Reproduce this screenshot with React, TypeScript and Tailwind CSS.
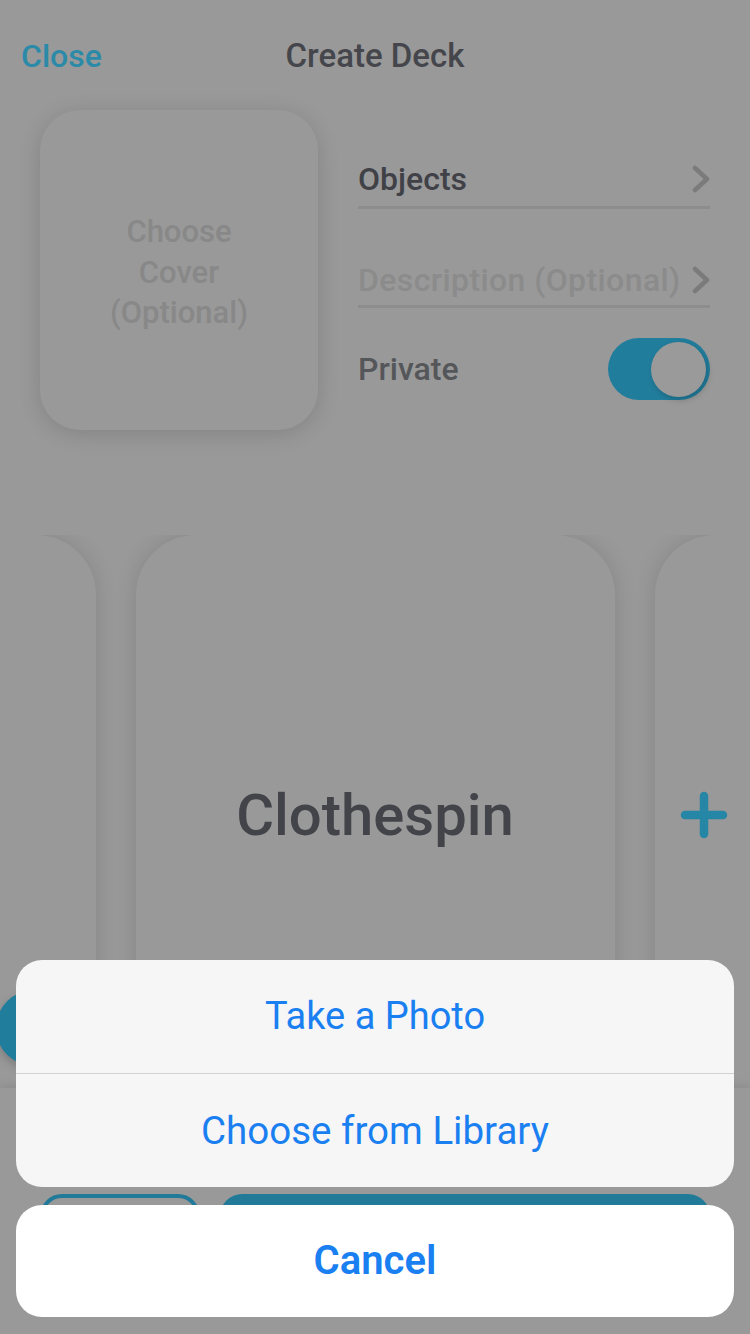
import React from 'react';

const din = "font-['Roboto',sans-serif]";

function Chevron() {
  return (
    <svg width="18" height="28" viewBox="0 0 18 28" fill="none">
      <path d="M3 3 L15 14 L3 25" stroke="#7b7b7b" strokeWidth="4.5" strokeLinecap="round" strokeLinejoin="round" />
    </svg>
  );
}

function App() {
  return (
    <div className={`relative w-[750px] h-[1334px] overflow-hidden bg-[#999999] ${din}`}>
      {/* header */}
      <div className="grid grid-cols-3 items-center h-[72px] mt-[20px] px-[21px]">
        <span className="text-[32px] font-medium text-[#2b8aa8] justify-self-start">Close</span>
        <span className="text-[33px] font-medium text-[#45464b] justify-self-center whitespace-nowrap">Create Deck</span>
        <span />
      </div>

      {/* cover + fields */}
      <div className="flex mt-[18px] pl-[40px]">
        <div className="w-[278px] h-[320px] rounded-[40px] bg-[#999999] shadow-[0_4px_22px_rgba(0,0,0,0.14)] flex items-center justify-center pt-[6px]">
          <p className="text-center text-[31px] leading-[40.5px] text-[#888888] font-medium">
            Choose
            <br />
            Cover
            <br />
            (Optional)
          </p>
        </div>
        <div className="ml-[40px] w-[352px] flex flex-col pt-[42px]">
          <div className="h-[57px] flex items-center justify-between border-b-[3px] border-[#8d8d8d]">
            <span className="text-[32px] font-medium text-[#404147]">Objects</span>
            <Chevron />
          </div>
          <div className="mt-[41px] h-[58px] flex items-center justify-between border-b-[3px] border-[#8d8d8d] pt-[5px]">
            <span className="text-[32px] font-medium tracking-[0.4px] text-[#8b8b8b] whitespace-nowrap">Description (Optional)</span>
            <Chevron />
          </div>
          <div className="mt-[30px] h-[62px] flex items-center justify-between">
            <span className="text-[32px] font-medium text-[#55565a]">Private</span>
            <div className="w-[102px] h-[62px] rounded-full bg-[#217d9c] flex items-center justify-end pr-[4px]">
              <div className="w-[55px] h-[55px] rounded-full bg-[#9a9a9a] shadow-[2px_3px_6px_rgba(0,0,0,0.18)]" />
            </div>
          </div>
        </div>
      </div>

      {/* carousel */}
      <div className="mt-[105px] h-[553px] overflow-hidden flex justify-center gap-[40px]">
        <div className="w-[479px] h-[580px] shrink-0 rounded-[60px] bg-[#999999] shadow-[0_0_22px_rgba(0,0,0,0.13)]" />
        <div className="w-[479px] h-[560px] shrink-0 rounded-[60px] bg-[#999999] shadow-[0_0_22px_rgba(0,0,0,0.13)] flex items-center justify-center">
          <span className="text-[58px] font-medium text-[#43444a]">Clothespin</span>
        </div>
        <div className="w-[479px] h-[560px] shrink-0 rounded-[60px] bg-[#999999] shadow-[0_0_22px_rgba(0,0,0,0.13)] flex items-center pl-[25px]">
          <svg width="48" height="48" viewBox="0 0 48 48" fill="none">
            <path d="M24 5 V43 M5 24 H43" stroke="#2586a5" strokeWidth="8.5" strokeLinecap="round" />
          </svg>
        </div>
      </div>

      {/* footer */}
      <div className="relative h-[246px] bg-[#999999] shadow-[0_-3px_8px_rgba(0,0,0,0.08)] flex gap-[20px] px-[40px] pt-[106px]">
        <div className="w-[160px] h-[88px] rounded-[22px] border-4 border-[#217b98]" />
        <div className="flex-1 h-[88px] rounded-[22px] bg-[#217b98]" />
      </div>

      {/* floating button */}
      <div className="absolute left-[-4px] top-[990px] w-[76px] h-[76px] rounded-full bg-[#217d9c] shadow-[0_4px_10px_rgba(0,0,0,0.2)]" />

      {/* action sheet */}
      <div className="absolute inset-x-[16px] bottom-[17px] flex flex-col gap-[18px] font-['Roboto',sans-serif]">
        <div className="rounded-[26px] bg-[#f6f6f7] overflow-hidden flex flex-col">
          <div className="h-[113px] flex items-center justify-center text-[38px] text-[#1a7ff0]">Take a Photo</div>
          <div className="h-px bg-[#d2d2d4]" />
          <div className="h-[113px] flex items-center justify-center text-[38.5px] text-[#1a7ff0]">Choose from Library</div>
        </div>
        <div className="h-[112px] rounded-[26px] bg-white flex items-center justify-center text-[40px] font-semibold text-[#1a7ff0]">
          Cancel
        </div>
      </div>
    </div>
  );
}

export default App;
